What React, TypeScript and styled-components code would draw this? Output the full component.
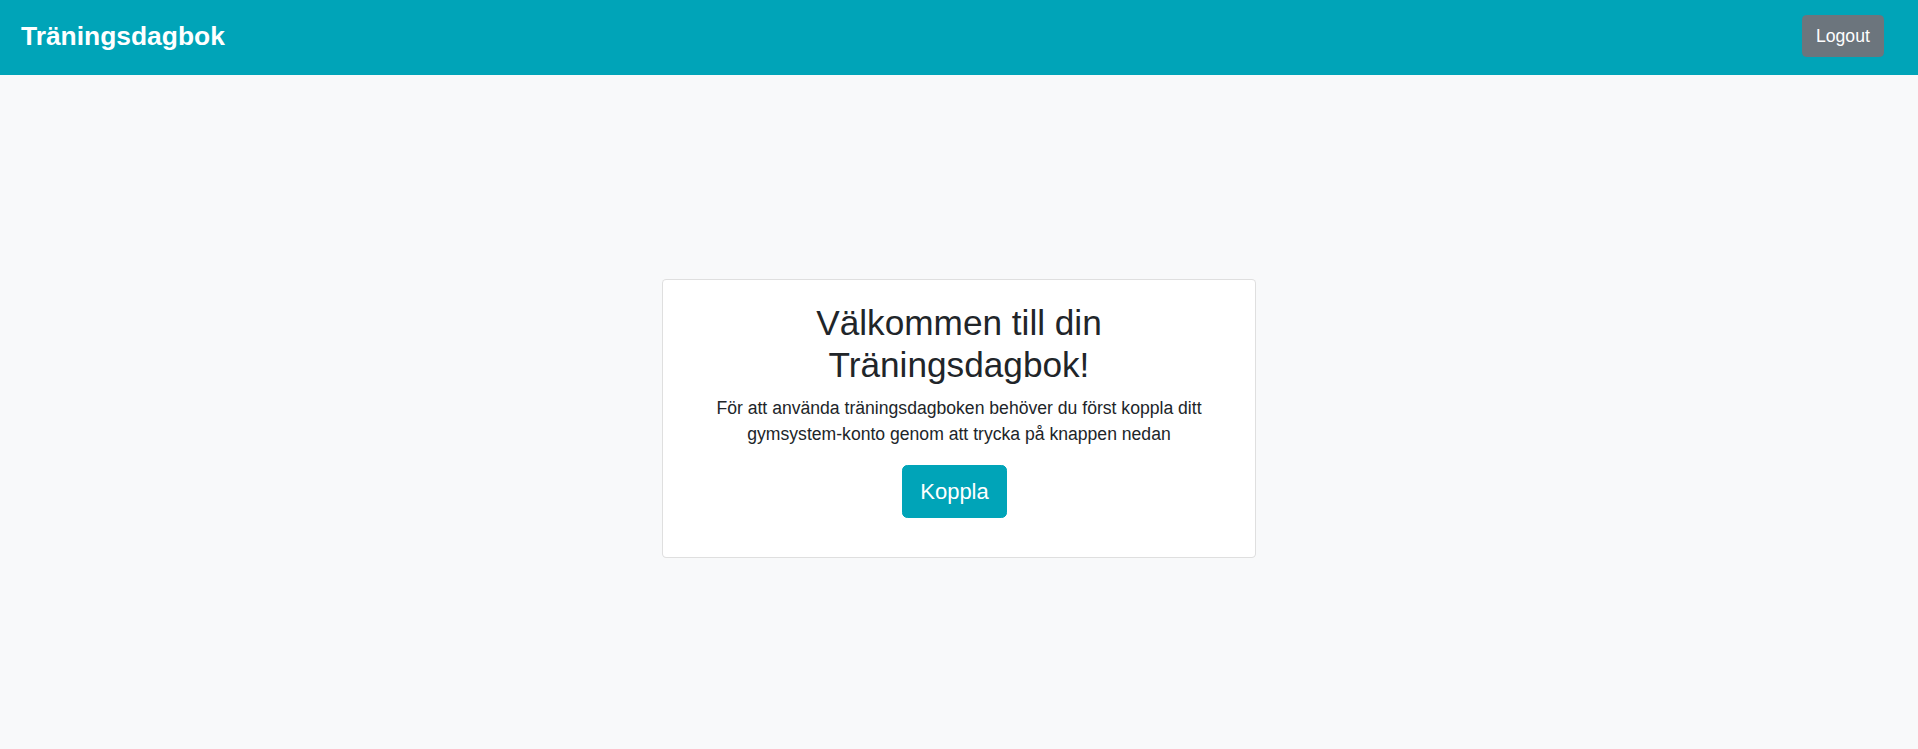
import React from "react";
import styled, { createGlobalStyle } from "styled-components";

const GlobalStyle = createGlobalStyle`
  * { box-sizing: border-box; }
  html, body { margin: 0; padding: 0; }
  body {
    background: #f8f9fa;
    font-family: "Liberation Sans", Arial, Helvetica, sans-serif;
    color: #212529;
    font-size: 17.6px;
    line-height: 1.5;
  }
`;

const Page = styled.div`
  min-height: 100vh;
  display: flex;
  flex-direction: column;
`;

const NavBar = styled.header`
  height: 75px;
  background: #00a4b8;
  display: flex;
  align-items: center;
  justify-content: space-between;
  padding: 0 34px 3px 21px;
`;

const Brand = styled.span`
  color: #ffffff;
  font-weight: 700;
  font-size: 26.4px;
  line-height: 1;
`;

const Button = styled.button<{ $variant: "secondary" | "info"; $size?: "lg" }>`
  font-family: inherit;
  border: 1px solid ${(p) => (p.$variant === "secondary" ? "#6c757d" : "#00a4b8")};
  background: ${(p) => (p.$variant === "secondary" ? "#6c757d" : "#00a4b8")};
  color: #ffffff;
  cursor: pointer;
  font-size: ${(p) => (p.$size === "lg" ? "22px" : "17.6px")};
  line-height: 1.5;
  padding: ${(p) => (p.$size === "lg" ? "8.8px 17.6px" : "6.6px 13.2px")};
  border-radius: ${(p) => (p.$size === "lg" ? "5.3px" : "4.4px")};
`;

const Main = styled.main`
  flex: 1;
  display: flex;
  align-items: center;
  justify-content: center;
  padding-top: 13px;
`;

const Card = styled.section`
  width: 594px;
  background: #ffffff;
  border: 1px solid rgba(0, 0, 0, 0.125);
  border-radius: 4.4px;
  padding: 22px;
  text-align: center;
`;

const Title = styled.h2`
  margin: 0 0 8.8px;
  font-size: 35.2px;
  font-weight: 500;
  line-height: 1.2;
  color: #212529;
`;

const Lead = styled.p`
  margin: 0 0 17.6px;
  font-size: 17.6px;
  line-height: 1.5;
`;

const Actions = styled.div`
  margin-bottom: 17.6px;
  padding-right: 9px;
  display: flex;
  justify-content: center;
`;

export default function App() {
  return (
    <>
      <GlobalStyle />
      <Page>
        <NavBar>
          <Brand>Träningsdagbok</Brand>
          <Button $variant="secondary">Logout</Button>
        </NavBar>
        <Main>
          <Card>
            <Title>Välkommen till din Träningsdagbok!</Title>
            <Lead>
              För att använda träningsdagboken behöver du först koppla ditt gymsystem-konto genom att
              trycka på knappen nedan
            </Lead>
            <Actions>
              <Button $variant="info" $size="lg">Koppla</Button>
            </Actions>
          </Card>
        </Main>
      </Page>
    </>
  );
}
